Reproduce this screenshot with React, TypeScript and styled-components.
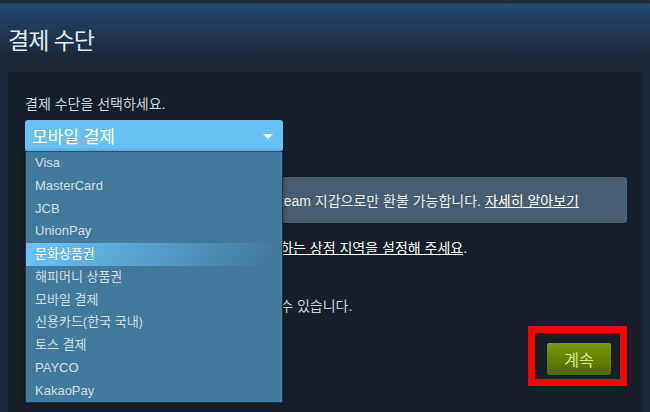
import React, { FC, useState } from 'react';
import styled, { createGlobalStyle } from 'styled-components';

const GlobalStyle = createGlobalStyle`
  html, body {
    margin: 0;
    padding: 0;
    background: #1b2838;
    font-family: 'Liberation Sans', 'Noto Sans CJK KR', sans-serif;
    overflow: hidden;
  }
`;

const Page = styled.div`
  width: 650px;
  height: 412px;
  background: linear-gradient(
    to bottom,
    #202d3e 0px,
    #202d3e 3px,
    #214c71 4px,
    #1f3a58 28px,
    #1b2738 58px,
    #1b2636 100%
  );
  overflow: hidden;
`;

const Header = styled.div`
  height: 72px;
  display: flex;
  align-items: center;
  padding: 6px 0 0 8px;
  box-sizing: border-box;
`;

const Title = styled.h1`
  margin: 0;
  font-size: 23px;
  font-weight: normal;
  color: #e5eaee;
  letter-spacing: -1px;
`;

const Panel = styled.div`
  margin: 0 7px 0 8px;
  height: 340px;
  background: #161e2a;
  padding: 22px 16px 0 17px;
  box-sizing: border-box;
`;

const Label = styled.div`
  font-size: 14px;
  line-height: 20px;
  color: #c6d4df;
`;

const SelectWrap = styled.div`
  position: relative;
  width: 258px;
  margin-top: 6px;
`;

const SelectBox = styled.div`
  height: 31px;
  display: flex;
  align-items: center;
  justify-content: space-between;
  padding: 0 10px 0 7px;
  background: #67c1f5;
  border-radius: 3px;
  border-bottom: 1px solid #2f6a8d;
  color: #ffffff;
  font-size: 17px;
`;

const Arrow = styled.span`
  width: 0;
  height: 0;
  border-left: 5px solid transparent;
  border-right: 5px solid transparent;
  border-top: 5px solid #ffffff;
  margin-top: 2px;
`;

const Dropdown = styled.ul`
  position: absolute;
  top: 32px;
  left: 0;
  width: 258px;
  margin: 0;
  padding: 0;
  list-style: none;
  background: #417a9b;
  border: 1px solid #1e3447;
  border-top: none;
  box-sizing: border-box;
  box-shadow: 0 0 4px rgba(0, 0, 0, 0.5);
  z-index: 10;
`;

const Option = styled.li<{ active?: boolean }>`
  height: 22.75px;
  line-height: 22.75px;
  padding-left: 9px;
  font-size: 13px;
  color: ${p => (p.active ? '#ffffff' : '#d3dde5')};
  background: ${p =>
    p.active
      ? 'linear-gradient(-60deg, #417a9b 5%, #67c1f5 95%)'
      : 'transparent'};
  white-space: nowrap;
`;

const InfoBox = styled.div`
  margin-top: 25px;
  height: 46px;
  display: flex;
  align-items: center;
  padding-left: 16px;
  background: #475d71;
  border-radius: 3px;
  font-size: 14px;
  color: #e6ecf0;
  white-space: nowrap;
`;

const Link = styled.span`
  color: #ffffff;
  text-decoration: underline;
`;

const Line = styled.div<{ gap: number }>`
  margin-top: ${p => p.gap}px;
  font-size: 14px;
  line-height: 20px;
  color: #c6d4df;
  white-space: nowrap;
`;

const Actions = styled.div`
  display: flex;
  justify-content: flex-end;
  margin-top: 10px;
`;

const Highlight = styled.div`
  border: 7px solid #ff0000;
  padding: 10px 9px 4px 12px;
`;

const ContinueButton = styled.div`
  width: 64px;
  height: 32px;
  display: flex;
  align-items: center;
  justify-content: center;
  border-radius: 2px;
  background: linear-gradient(to bottom, #799905 5%, #536904 95%);
  color: #d2e885;
  font-size: 16px;
  cursor: pointer;
`;

const methods = [
  'Visa',
  'MasterCard',
  'JCB',
  'UnionPay',
  '문화상품권',
  '해피머니 상품권',
  '모바일 결제',
  '신용카드(한국 국내)',
  '토스 결제',
  'PAYCO',
  'KakaoPay',
];

const App: FC = () => {
  const [selected] = useState('모바일 결제');
  const [hovered, setHovered] = useState('문화상품권');

  return (
    <Page>
      <GlobalStyle />
      <Header>
        <Title>결제 수단</Title>
      </Header>
      <Panel>
        <Label>결제 수단을 선택하세요.</Label>
        <SelectWrap>
          <SelectBox>
            <span>{selected}</span>
            <Arrow />
          </SelectBox>
          <Dropdown>
            {methods.map(m => (
              <Option
                key={m}
                active={m === hovered}
                onMouseEnter={() => setHovered(m)}
              >
                {m}
              </Option>
            ))}
          </Dropdown>
        </SelectWrap>
        <InfoBox>
          이 결제 수단으로 구매하신 모든 제품은 Steam 지갑으로만 환불 가능합니다.&nbsp;
          <Link>자세히 알아보기</Link>
        </InfoBox>
        <Line gap={15}>
          이 결제 수단을 사용하려면 먼저 <Link>계정에서 원하는 상점 지역을 설정해 주세요</Link>.
        </Line>
        <Line gap={38}>결제 후 제품은 라이브러리에서 바로 확인할 수 있습니다.</Line>
        <Actions>
          <Highlight>
            <ContinueButton>계속</ContinueButton>
          </Highlight>
        </Actions>
      </Panel>
    </Page>
  );
};

export default App;
